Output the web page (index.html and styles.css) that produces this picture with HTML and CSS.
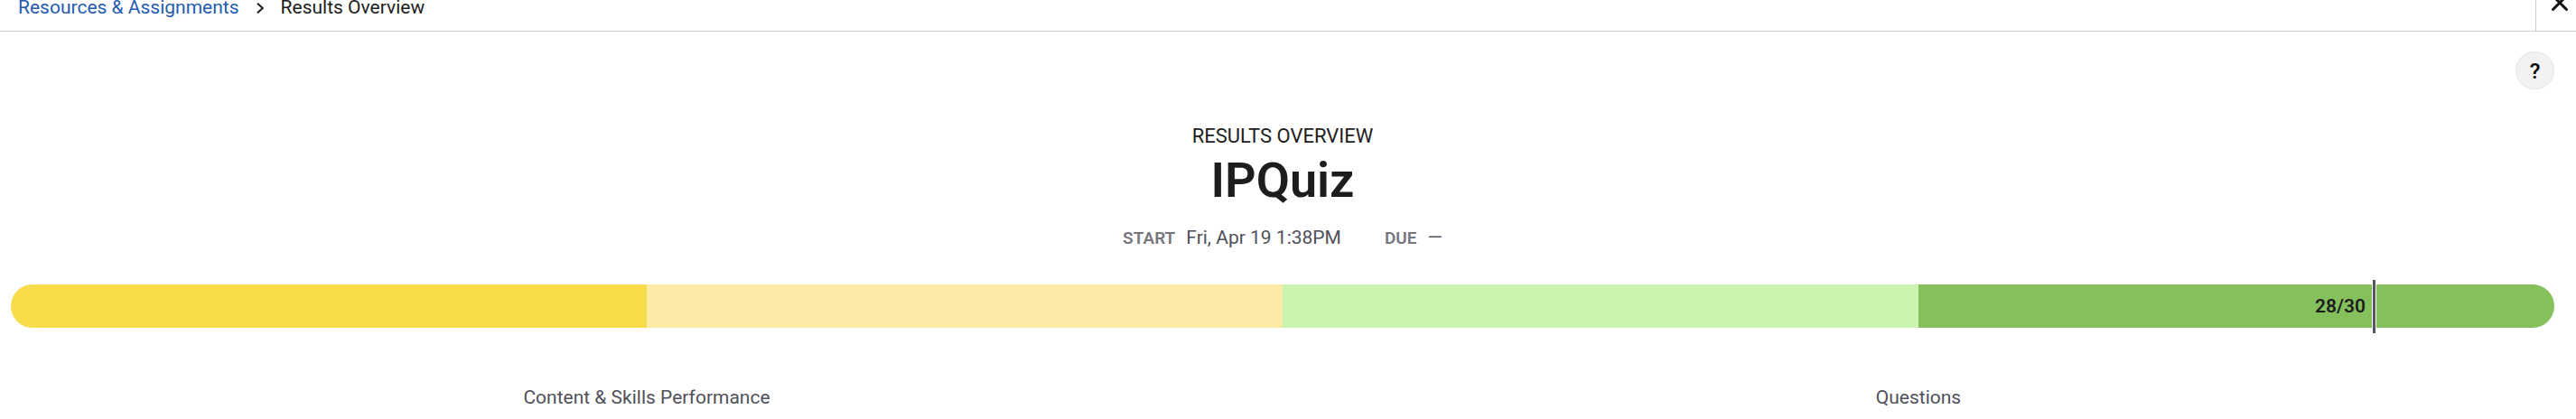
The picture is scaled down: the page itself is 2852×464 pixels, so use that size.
FILE: index.html
```
<!DOCTYPE html>
<html lang="en">
<head>
<meta charset="utf-8">
<meta name="viewport" content="width=device-width, initial-scale=1">
<title>Results Overview</title>
<link rel="stylesheet" href="styles.css">
</head>
<body>
<header class="topbar">
  <nav class="breadcrumbs" aria-label="Breadcrumb">
    <a class="crumb-link" href="#">Resources &amp; Assignments</a>
    <svg class="chevron" viewBox="0 0 8 12" aria-hidden="true"><path d="M1 .7l5.800 5.300L1 11.300"/></svg>
    <span class="crumb-current" aria-current="page">Results Overview</span>
  </nav>
  <button class="close" type="button" aria-label="Close">
    <svg class="close-icon" viewBox="0 0 18 12" aria-hidden="true"><path d="M1.500-4.500l15 15M16.500-4.500l-15 15"/></svg>
  </button>
</header>
<main class="page">
  <div class="tools"><button class="help" type="button" aria-label="Help">?</button></div>
  <section class="summary">
    <p class="eyebrow">RESULTS OVERVIEW</p>
    <h1 class="title">IPQuiz</h1>
    <dl class="dates">
      <div class="date"><dt>START</dt><dd>Fri, Apr 19 1:38PM</dd></div>
      <div class="date"><dt>DUE</dt><dd>—</dd></div>
    </dl>
  </section>
  <div class="scale">
    <div class="bands">
      <span class="band band-low"></span>
      <span class="band band-fair"></span>
      <span class="band band-good"></span>
      <span class="band band-high"></span>
    </div>
    <div class="score" style="left: 92.900%"><span class="score-label">28/30</span></div>
  </div>
  <nav class="tabs" aria-label="Results sections">
    <button class="tab" type="button">Content &amp; Skills Performance</button>
    <button class="tab" type="button">Questions</button>
  </nav>
</main>
</body>
</html>
```
FILE: styles.css
```
* { box-sizing: border-box; }

body {
  margin: 0;
  background: #fff;
  color: #1d1d1d;
  font-family: Roboto, "Liberation Sans", sans-serif;
  font-size: 21px;
  line-height: 24px;
}

button {
  border: 0;
  padding: 0;
  background: none;
  color: inherit;
  font: inherit;
  cursor: pointer;
}

.topbar {
  display: flex;
  justify-content: space-between;
  border-bottom: 1px solid #cfcfcf;
}

.breadcrumbs {
  display: flex;
  align-items: flex-start;
  gap: 19px;
  padding: 0 20px 18px;
  line-height: 16px;
}

.crumb-link {
  color: #255bb0;
  text-decoration: none;
}

.chevron {
  width: 8px;
  height: 12px;
  margin-top: 3px;
  fill: none;
  stroke: #1d1d1d;
  stroke-width: 2;
}

.close {
  display: flex;
  align-items: flex-start;
  border-left: 1px solid #cfcfcf;
  padding: 0 9px 0 17px;
}

.close-icon {
  width: 18px;
  height: 12px;
  fill: none;
  stroke: #111;
  stroke-width: 3;
  stroke-linecap: round;
}

.page { padding: 22px 24px 0 12px; }

.tools {
  display: flex;
  justify-content: flex-end;
}

.help {
  width: 43px;
  height: 42px;
  padding-top: 2px;
  border: 1px solid #e5e5e5;
  border-radius: 50%;
  background: #f2f2f2;
  color: #000;
  font-size: 24px;
  font-weight: 500;
}

.summary {
  padding-top: 40px;
  text-align: center;
}

.eyebrow {
  margin: 0;
  font-size: 22px;
}

.title {
  margin: 5px 0 0;
  font-size: 54px;
  font-weight: 600;
  line-height: 64px;
}

.dates {
  display: flex;
  justify-content: center;
  gap: 48px;
  margin: 19px 0 0;
}

.date {
  display: flex;
  align-items: baseline;
  gap: 12px;
}

.date dt {
  color: #76767e;
  font-size: 19px;
  font-weight: 600;
}

.date dd {
  margin: 0;
  color: #50505a;
}

.scale {
  position: relative;
  margin-top: 39px;
}

.bands {
  display: grid;
  grid-template-columns: repeat(4, 1fr);
  height: 48px;
  overflow: hidden;
  border-radius: 24px;
}

.band-low { background: #f8dc4a; }
.band-fair { background: #fceba6; }
.band-good { background: #c9f3ae; }
.band-high { background: #84c15d; }

/* Marker that straddles the bar at the learner's score */
.score {
  position: absolute;
  top: -5px;
  bottom: -6px;
  width: 5px;
  margin-left: -2px;
  border: solid #fff;
  border-width: 0 1px;
  background: #555560;
}

.score-label {
  position: absolute;
  top: 17px;
  right: 11px;
  color: #1d1d1d;
  font-weight: 600;
}

.tabs {
  display: grid;
  grid-template-columns: repeat(2, 1fr);
  margin-top: 65px;
}

.tab {
  padding-bottom: 12px;
  color: #50505a;
}
```
